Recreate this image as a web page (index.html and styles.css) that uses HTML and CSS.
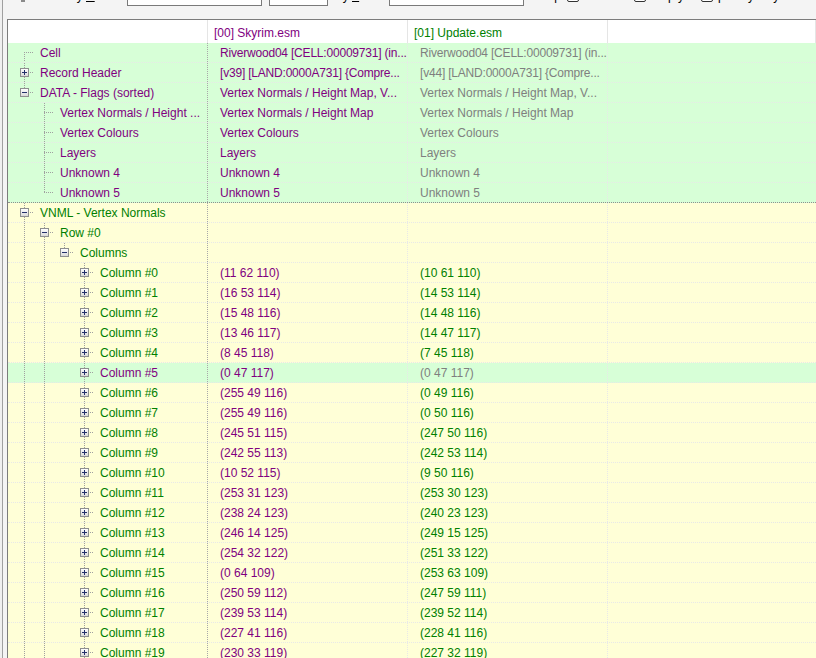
FILE: index.html
```html
<!DOCTYPE html>
<html lang="en">
<head>
    <meta charset="UTF-8">
    <title>LAND compare</title>
    <link rel="stylesheet" href="styles.css">
</head>
<body>
    <div class="app">
        <div class="splitter"></div>
        <div class="pane">
            <!-- filter toolbar, scrolled mostly out of view -->
            <div class="filters">
                <div class="filter-row">
                    <span class="tb-mark"></span>
                    <label class="tb-lbl name">Filter by <u>N</u>ame:</label>
                    <span class="tb-input wide"></span>
                    <span class="tb-input small"></span>
                    <label class="tb-lbl value">by <u>V</u>alue:</label>
                    <span class="tb-input wide"></span>
                    <label class="tb-lbl keep">Keep</label>
                    <span class="tb-check"></span>
                    <span class="tb-check gap"></span>
                    <label class="tb-lbl empty">Empty</label>
                    <span class="tb-check"></span>
                    <label class="tb-lbl prio">priority only</label>
                </div>
            </div>

            <div class="grid">
                <div class="head">
                    <div class="c0"></div>
                    <div class="c1 pur">[00] Skyrim.esm</div>
                    <div class="c2 grn">[01] Update.esm</div>
                    <div class="c3"></div>
                </div>

                <div class="row same">
                    <div class="c0"><span class="g f"></span><span class="lbl pur">Cell</span></div>
                    <div class="c1 pur fit">Riverwood04 [CELL:00009731] (in...</div>
                    <div class="c2 gry fit">Riverwood04 [CELL:00009731] (in...</div>
                    <div class="c3"></div>
                </div>
                <div class="row same">
                    <div class="c0"><span class="g t"><i class="bx plus"></i></span><span class="lbl pur">Record Header</span></div>
                    <div class="c1 pur fit">[v39] [LAND:0000A731] {Compre...</div>
                    <div class="c2 gry fit">[v44] [LAND:0000A731] {Compre...</div>
                    <div class="c3"></div>
                </div>
                <div class="row same">
                    <div class="c0"><span class="g e"><i class="bx"></i></span><span class="lbl pur">DATA - Flags (sorted)</span></div>
                    <div class="c1 pur">Vertex Normals / Height Map, V...</div>
                    <div class="c2 gry">Vertex Normals / Height Map, V...</div>
                    <div class="c3"></div>
                </div>
                <div class="row same">
                    <div class="c0"><span class="g"></span><span class="g t"></span><span class="lbl pur">Vertex Normals / Height ...</span></div>
                    <div class="c1 pur">Vertex Normals / Height Map</div>
                    <div class="c2 gry">Vertex Normals / Height Map</div>
                    <div class="c3"></div>
                </div>
                <div class="row same">
                    <div class="c0"><span class="g"></span><span class="g t"></span><span class="lbl pur">Vertex Colours</span></div>
                    <div class="c1 pur">Vertex Colours</div>
                    <div class="c2 gry">Vertex Colours</div>
                    <div class="c3"></div>
                </div>
                <div class="row same">
                    <div class="c0"><span class="g"></span><span class="g t"></span><span class="lbl pur">Layers</span></div>
                    <div class="c1 pur">Layers</div>
                    <div class="c2 gry">Layers</div>
                    <div class="c3"></div>
                </div>
                <div class="row same">
                    <div class="c0"><span class="g"></span><span class="g t"></span><span class="lbl pur">Unknown 4</span></div>
                    <div class="c1 pur">Unknown 4</div>
                    <div class="c2 gry">Unknown 4</div>
                    <div class="c3"></div>
                </div>
                <div class="row same focus">
                    <div class="c0"><span class="g"></span><span class="g e"></span><span class="lbl pur">Unknown 5</span></div>
                    <div class="c1 pur">Unknown 5</div>
                    <div class="c2 gry">Unknown 5</div>
                    <div class="c3"></div>
                </div>

                <div class="row diff">
                    <div class="c0"><span class="g t"><i class="bx"></i></span><span class="lbl grn">VNML - Vertex Normals</span></div>
                    <div class="c1"></div>
                    <div class="c2"></div>
                    <div class="c3"></div>
                </div>
                <div class="row diff">
                    <div class="c0"><span class="g v"></span><span class="g t"><i class="bx"></i></span><span class="lbl grn">Row #0</span></div>
                    <div class="c1"></div>
                    <div class="c2"></div>
                    <div class="c3"></div>
                </div>
                <div class="row diff">
                    <div class="c0"><span class="g v"></span><span class="g v"></span><span class="g e"><i class="bx"></i></span><span class="lbl grn">Columns</span></div>
                    <div class="c1"></div>
                    <div class="c2"></div>
                    <div class="c3"></div>
                </div>

                <div class="row diff">
                    <div class="c0"><span class="g v"></span><span class="g v"></span><span class="g"></span><span class="g t"><i class="bx plus"></i></span><span class="lbl grn">Column #0</span></div>
                    <div class="c1 pur">(11 62 110)</div>
                    <div class="c2 grn">(10 61 110)</div>
                    <div class="c3"></div>
                </div>
                <div class="row diff">
                    <div class="c0"><span class="g v"></span><span class="g v"></span><span class="g"></span><span class="g t"><i class="bx plus"></i></span><span class="lbl grn">Column #1</span></div>
                    <div class="c1 pur">(16 53 114)</div>
                    <div class="c2 grn">(14 53 114)</div>
                    <div class="c3"></div>
                </div>
                <div class="row diff">
                    <div class="c0"><span class="g v"></span><span class="g v"></span><span class="g"></span><span class="g t"><i class="bx plus"></i></span><span class="lbl grn">Column #2</span></div>
                    <div class="c1 pur">(15 48 116)</div>
                    <div class="c2 grn">(14 48 116)</div>
                    <div class="c3"></div>
                </div>
                <div class="row diff">
                    <div class="c0"><span class="g v"></span><span class="g v"></span><span class="g"></span><span class="g t"><i class="bx plus"></i></span><span class="lbl grn">Column #3</span></div>
                    <div class="c1 pur">(13 46 117)</div>
                    <div class="c2 grn">(14 47 117)</div>
                    <div class="c3"></div>
                </div>
                <div class="row diff">
                    <div class="c0"><span class="g v"></span><span class="g v"></span><span class="g"></span><span class="g t"><i class="bx plus"></i></span><span class="lbl grn">Column #4</span></div>
                    <div class="c1 pur">(8 45 118)</div>
                    <div class="c2 grn">(7 45 118)</div>
                    <div class="c3"></div>
                </div>
                <div class="row same">
                    <div class="c0"><span class="g v"></span><span class="g v"></span><span class="g"></span><span class="g t"><i class="bx plus"></i></span><span class="lbl pur">Column #5</span></div>
                    <div class="c1 pur">(0 47 117)</div>
                    <div class="c2 gry">(0 47 117)</div>
                    <div class="c3"></div>
                </div>
                <div class="row diff">
                    <div class="c0"><span class="g v"></span><span class="g v"></span><span class="g"></span><span class="g t"><i class="bx plus"></i></span><span class="lbl grn">Column #6</span></div>
                    <div class="c1 pur">(255 49 116)</div>
                    <div class="c2 grn">(0 49 116)</div>
                    <div class="c3"></div>
                </div>
                <div class="row diff">
                    <div class="c0"><span class="g v"></span><span class="g v"></span><span class="g"></span><span class="g t"><i class="bx plus"></i></span><span class="lbl grn">Column #7</span></div>
                    <div class="c1 pur">(255 49 116)</div>
                    <div class="c2 grn">(0 50 116)</div>
                    <div class="c3"></div>
                </div>
                <div class="row diff">
                    <div class="c0"><span class="g v"></span><span class="g v"></span><span class="g"></span><span class="g t"><i class="bx plus"></i></span><span class="lbl grn">Column #8</span></div>
                    <div class="c1 pur">(245 51 115)</div>
                    <div class="c2 grn">(247 50 116)</div>
                    <div class="c3"></div>
                </div>
                <div class="row diff">
                    <div class="c0"><span class="g v"></span><span class="g v"></span><span class="g"></span><span class="g t"><i class="bx plus"></i></span><span class="lbl grn">Column #9</span></div>
                    <div class="c1 pur">(242 55 113)</div>
                    <div class="c2 grn">(242 53 114)</div>
                    <div class="c3"></div>
                </div>
                <div class="row diff">
                    <div class="c0"><span class="g v"></span><span class="g v"></span><span class="g"></span><span class="g t"><i class="bx plus"></i></span><span class="lbl grn">Column #10</span></div>
                    <div class="c1 pur">(10 52 115)</div>
                    <div class="c2 grn">(9 50 116)</div>
                    <div class="c3"></div>
                </div>
                <div class="row diff">
                    <div class="c0"><span class="g v"></span><span class="g v"></span><span class="g"></span><span class="g t"><i class="bx plus"></i></span><span class="lbl grn">Column #11</span></div>
                    <div class="c1 pur">(253 31 123)</div>
                    <div class="c2 grn">(253 30 123)</div>
                    <div class="c3"></div>
                </div>
                <div class="row diff">
                    <div class="c0"><span class="g v"></span><span class="g v"></span><span class="g"></span><span class="g t"><i class="bx plus"></i></span><span class="lbl grn">Column #12</span></div>
                    <div class="c1 pur">(238 24 123)</div>
                    <div class="c2 grn">(240 23 123)</div>
                    <div class="c3"></div>
                </div>
                <div class="row diff">
                    <div class="c0"><span class="g v"></span><span class="g v"></span><span class="g"></span><span class="g t"><i class="bx plus"></i></span><span class="lbl grn">Column #13</span></div>
                    <div class="c1 pur">(246 14 125)</div>
                    <div class="c2 grn">(249 15 125)</div>
                    <div class="c3"></div>
                </div>
                <div class="row diff">
                    <div class="c0"><span class="g v"></span><span class="g v"></span><span class="g"></span><span class="g t"><i class="bx plus"></i></span><span class="lbl grn">Column #14</span></div>
                    <div class="c1 pur">(254 32 122)</div>
                    <div class="c2 grn">(251 33 122)</div>
                    <div class="c3"></div>
                </div>
                <div class="row diff">
                    <div class="c0"><span class="g v"></span><span class="g v"></span><span class="g"></span><span class="g t"><i class="bx plus"></i></span><span class="lbl grn">Column #15</span></div>
                    <div class="c1 pur">(0 64 109)</div>
                    <div class="c2 grn">(253 63 109)</div>
                    <div class="c3"></div>
                </div>
                <div class="row diff">
                    <div class="c0"><span class="g v"></span><span class="g v"></span><span class="g"></span><span class="g t"><i class="bx plus"></i></span><span class="lbl grn">Column #16</span></div>
                    <div class="c1 pur">(250 59 112)</div>
                    <div class="c2 grn">(247 59 111)</div>
                    <div class="c3"></div>
                </div>
                <div class="row diff">
                    <div class="c0"><span class="g v"></span><span class="g v"></span><span class="g"></span><span class="g t"><i class="bx plus"></i></span><span class="lbl grn">Column #17</span></div>
                    <div class="c1 pur">(239 53 114)</div>
                    <div class="c2 grn">(239 52 114)</div>
                    <div class="c3"></div>
                </div>
                <div class="row diff">
                    <div class="c0"><span class="g v"></span><span class="g v"></span><span class="g"></span><span class="g t"><i class="bx plus"></i></span><span class="lbl grn">Column #18</span></div>
                    <div class="c1 pur">(227 41 116)</div>
                    <div class="c2 grn">(228 41 116)</div>
                    <div class="c3"></div>
                </div>
                <div class="row diff">
                    <div class="c0"><span class="g v"></span><span class="g v"></span><span class="g"></span><span class="g t"><i class="bx plus"></i></span><span class="lbl grn">Column #19</span></div>
                    <div class="c1 pur">(230 33 119)</div>
                    <div class="c2 grn">(227 32 119)</div>
                    <div class="c3"></div>
                </div>
            </div>
        </div>
    </div>
</body>
</html>
```

FILE: styles.css
```css
* {
    margin: 0;
    padding: 0;
    box-sizing: border-box;
}

body {
    font: 12px "Liberation Sans", Arial, sans-serif;
    color: #000;
    background-color: #f4f4f4;
    overflow: hidden;
}

.app {
    display: flex;
    height: 100vh;
}

.splitter {
    width: 3px;
    flex-shrink: 0;
    background-color: #f0f0f0;
    border-right: 1px solid #a0a0a0;
}

.pane {
    flex: 1;
    min-width: 0;
    padding-left: 4px;
    display: flex;
    flex-direction: column;
}

/* toolbar */
.filters {
    height: 19px;
    flex-shrink: 0;
    overflow: hidden;
}

.filter-row {
    display: flex;
    align-items: center;
    height: 19px;
    margin-top: -13px;
    line-height: 19px;
    white-space: nowrap;
}

.tb-mark {
    align-self: flex-start;
    margin: 13px 0 0 14px;
    width: 4px;
    height: 2px;
    background-color: #8a8a8a;
}

.tb-lbl {
    flex-shrink: 0;
}

.tb-lbl.name {
    margin-left: 15px;
    width: 87px;
}

.tb-lbl.value {
    margin-left: 8px;
    width: 53px;
}

.tb-lbl.keep {
    margin-left: 9px;
    width: 34px;
}

.tb-lbl.empty {
    margin-left: 4px;
    width: 51px;
}

.tb-lbl.prio {
    margin-left: 5px;
}

.tb-input {
    height: 19px;
    flex-shrink: 0;
    background-color: #fff;
    border: 1px solid #7a7a7a;
}

.tb-input.wide {
    width: 135px;
}

.tb-input.small {
    width: 59px;
    margin-left: 7px;
}

.tb-check {
    width: 12px;
    height: 12px;
    margin-top: -2px;
    flex-shrink: 0;
    background-color: #fff;
    border: 1px solid #333;
    border-radius: 2px;
}

.tb-check.gap {
    margin-left: 55px;
}

/* grid */
.grid {
    flex: 1;
    overflow: hidden;
    background-color: #fff;
    border-top: 1px solid #7c7c7c;
    border-left: 1px solid #7c7c7c;
}

.c0, .c1, .c2 {
    width: 200px;
    flex-shrink: 0;
    overflow: hidden;
}

.c3 {
    flex: 1;
}

.head {
    display: flex;
    height: 23px;
    line-height: 24px;
}

.head > div {
    padding: 1px 0 0 6px;
    border-right: 1px solid #e5e5e5;
}

.row {
    display: flex;
    height: 20px;
    line-height: 19px;
    white-space: nowrap;
    border-bottom: 1px dotted #e8e8e8;
}

.row.same {
    background-color: #d7ffd7;
}

.row.diff {
    background-color: #ffffd7;
}

.row.focus {
    border-bottom-color: #8e8e8e;
}

.row .c0 {
    display: flex;
    padding-left: 6px;
    border-right: 1px dotted #a8a8a8;
}

.row .c1, .row .c2 {
    padding: 1px 0 0 12px;
    border-right: 1px dotted #e8e8e8;
}

.fit {
    letter-spacing: -0.2px;
}

.pur { color: #800080; }
.grn { color: #008000; }
.gry { color: #7f7f7f; }

.lbl {
    margin-left: 6px;
    padding-top: 1px;
}

/* tree guides: v = through line, t = tee, e = last child, f = first root */
.g {
    width: 20px;
    height: 19px;
    flex-shrink: 0;
    background-repeat: no-repeat;
}

.g.v {
    background-image: repeating-linear-gradient(#a0a0a0 0 1px, transparent 1px 2px);
    background-position: 10px 0;
    background-size: 1px 19px;
}

.g.t {
    background-image:
        repeating-linear-gradient(to right, #a0a0a0 0 1px, transparent 1px 2px),
        repeating-linear-gradient(#a0a0a0 0 1px, transparent 1px 2px);
    background-position: 10px 9px, 10px 0;
    background-size: 12px 1px, 1px 19px;
}

.g.e {
    background-image:
        repeating-linear-gradient(to right, #a0a0a0 0 1px, transparent 1px 2px),
        repeating-linear-gradient(#a0a0a0 0 1px, transparent 1px 2px);
    background-position: 10px 9px, 10px 0;
    background-size: 12px 1px, 1px 9px;
}

.g.f {
    background-image:
        repeating-linear-gradient(to right, #a0a0a0 0 1px, transparent 1px 2px),
        repeating-linear-gradient(#a0a0a0 0 1px, transparent 1px 2px);
    background-position: 10px 9px, 10px 9px;
    background-size: 12px 1px, 1px 10px;
}

/* expand / collapse button */
.bx {
    display: block;
    width: 9px;
    height: 9px;
    margin: 5px 0 0 6px;
    border: 1px solid #8e8f8f;
    background:
        linear-gradient(#24306a, #24306a) 1px 3px / 5px 1px no-repeat,
        linear-gradient(#fff, #d9d9d9);
}

.bx.plus {
    background:
        linear-gradient(#24306a, #24306a) 1px 3px / 5px 1px no-repeat,
        linear-gradient(#24306a, #24306a) 3px 1px / 1px 5px no-repeat,
        linear-gradient(#fff, #d9d9d9);
}
```
